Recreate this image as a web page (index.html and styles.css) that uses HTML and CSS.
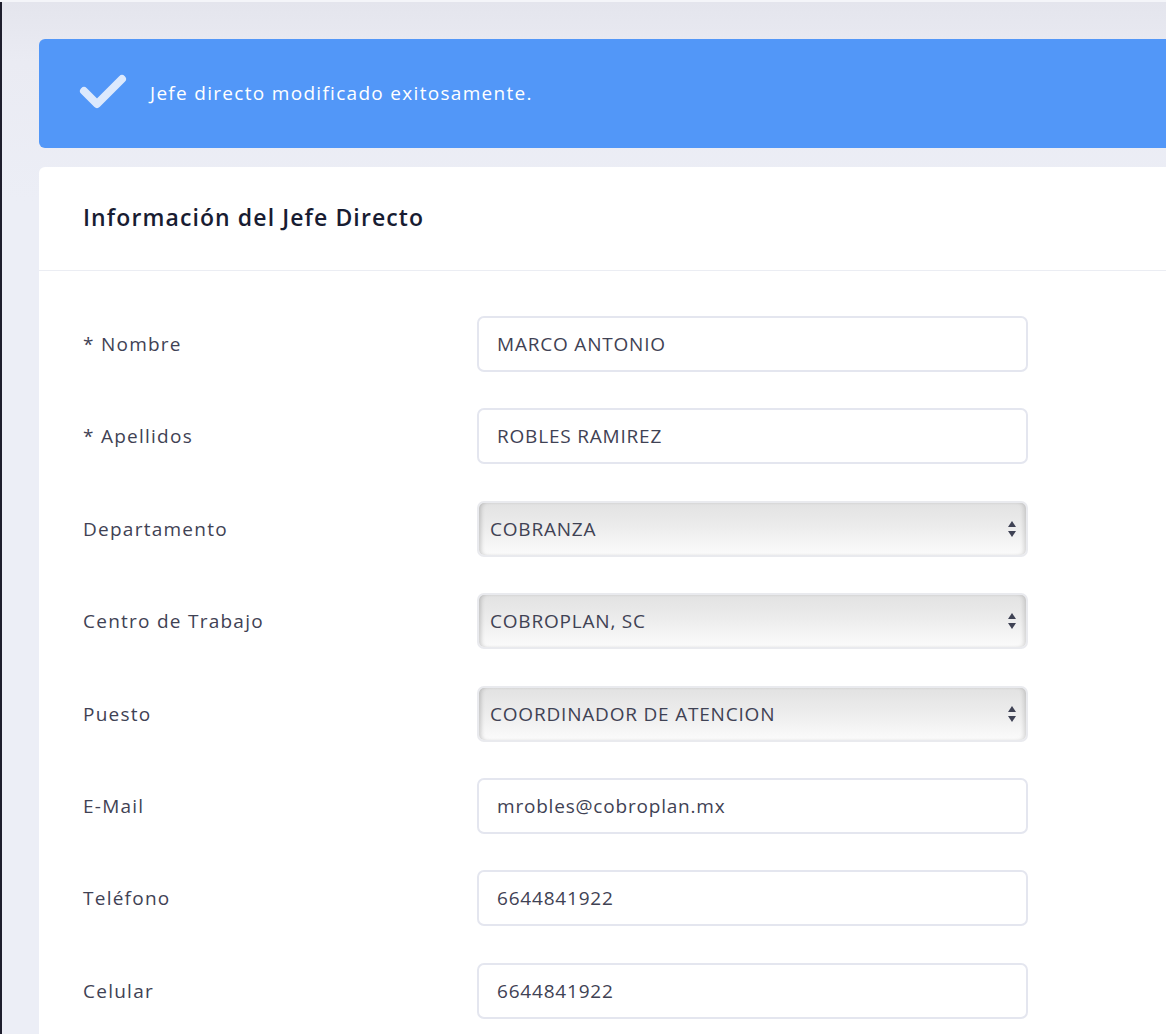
FILE: index.html
```html
<!DOCTYPE html>
<html lang="es">
<head>
<meta charset="utf-8">
<title>Jefe Directo</title>
<link rel="stylesheet" href="styles.css">
</head>
<body>
<div class="frame">
  <div class="content">
    <div class="alert">
      <svg class="alert-icon" width="52" height="40" viewBox="0 0 52 40">
        <path d="M6 18 L19 31 L44 6" fill="none" stroke="#dce9fd" stroke-width="8" stroke-linecap="round" stroke-linejoin="round"/>
      </svg>
      <span class="alert-text">Jefe directo modificado exitosamente.</span>
    </div>
    <div class="card">
      <div class="card-header">
        <h3 class="card-title">Información del Jefe Directo</h3>
      </div>
      <div class="card-body">
        <div class="row"><label class="label">* Nombre</label><div class="input">MARCO ANTONIO</div></div>
        <div class="row"><label class="label">* Apellidos</label><div class="input">ROBLES RAMIREZ</div></div>
        <div class="row"><label class="label">Departamento</label><div class="select">COBRANZA<span class="arrows"></span></div></div>
        <div class="row"><label class="label">Centro de Trabajo</label><div class="select">COBROPLAN, SC<span class="arrows"></span></div></div>
        <div class="row"><label class="label">Puesto</label><div class="select">COORDINADOR DE ATENCION<span class="arrows"></span></div></div>
        <div class="row"><label class="label">E-Mail</label><div class="input">mrobles@cobroplan.mx</div></div>
        <div class="row"><label class="label">Teléfono</label><div class="input">6644841922</div></div>
        <div class="row"><label class="label">Celular</label><div class="input">6644841922</div></div>
      </div>
    </div>
  </div>
</div>
</body>
</html>
```
FILE: styles.css
```css
* { box-sizing: border-box; }
html, body { margin: 0; padding: 0; }
body {
  width: 1166px;
  height: 1034px;
  overflow: hidden;
  font-family: "Open Sans", "Liberation Sans", sans-serif;
  background: #f4f5f9;
}
.frame {
  height: 100%;
  margin-top: 2px;
  border-left: 2px solid #1e1e2d;
  background: linear-gradient(180deg, #e4e5ed 0px, #eaebf3 60px, #eceef6 200px, #eceef6 100%);
  overflow: hidden;
}
.content {
  padding: 37px 0 0 37px;
  width: 1200px;
}
.alert {
  height: 109px;
  background: #5297f8;
  border-radius: 6px;
  display: flex;
  align-items: center;
  padding-left: 39px;
}
.alert-icon { display: block; margin-right: 20px; margin-top: -2px; }
.alert-text {
  color: #ffffff;
  font-size: 19px;
  letter-spacing: 1.3px;
  margin-top: -2px;
}
.card {
  margin-top: 19px;
  background: #ffffff;
  border-radius: 6px;
}
.card-header {
  height: 104px;
  border-bottom: 1px solid #ebedf3;
  display: flex;
  align-items: center;
  padding-left: 44px;
  padding-bottom: 3px;
}
.card-title {
  margin: 0;
  font-size: 23px;
  font-weight: 600;
  letter-spacing: 1.1px;
  color: #181c32;
}
.card-body {
  padding: 45px 44px 40px 44px;
  display: flex;
  flex-direction: column;
  gap: 36.4px;
}
.row {
  display: flex;
  align-items: center;
  height: 56px;
}
.label {
  width: 394px;
  font-size: 19px;
  letter-spacing: 1.25px;
  color: #3f4254;
}
.input, .select {
  width: 551px;
  height: 56px;
  border: 2px solid #e4e6ef;
  border-radius: 7px;
  display: flex;
  align-items: center;
  font-size: 19px;
  letter-spacing: 0.8px;
  color: #3f4254;
}
.input { padding-left: 18px; background: #fff; }
.select {
  position: relative;
  padding-left: 11px;
  background: linear-gradient(180deg, #e2e2e2 0%, #ececec 45%, #fbfbfb 100%);
  border-color: #e9eaee;
  box-shadow: inset 4px 0 4px -2px rgba(0,0,0,0.18), inset -4px 0 4px -2px rgba(0,0,0,0.14);
}
.arrows {
  position: absolute;
  right: 10px;
  top: 50%;
  width: 8px;
  height: 18px;
  margin-top: -9px;
}
.arrows::before, .arrows::after {
  content: "";
  position: absolute;
  left: 0;
  border-left: 4px solid transparent;
  border-right: 4px solid transparent;
}
.arrows::before { top: 1px; border-bottom: 6px solid #3f4254; }
.arrows::after { bottom: 1px; border-top: 6px solid #3f4254; }
```
